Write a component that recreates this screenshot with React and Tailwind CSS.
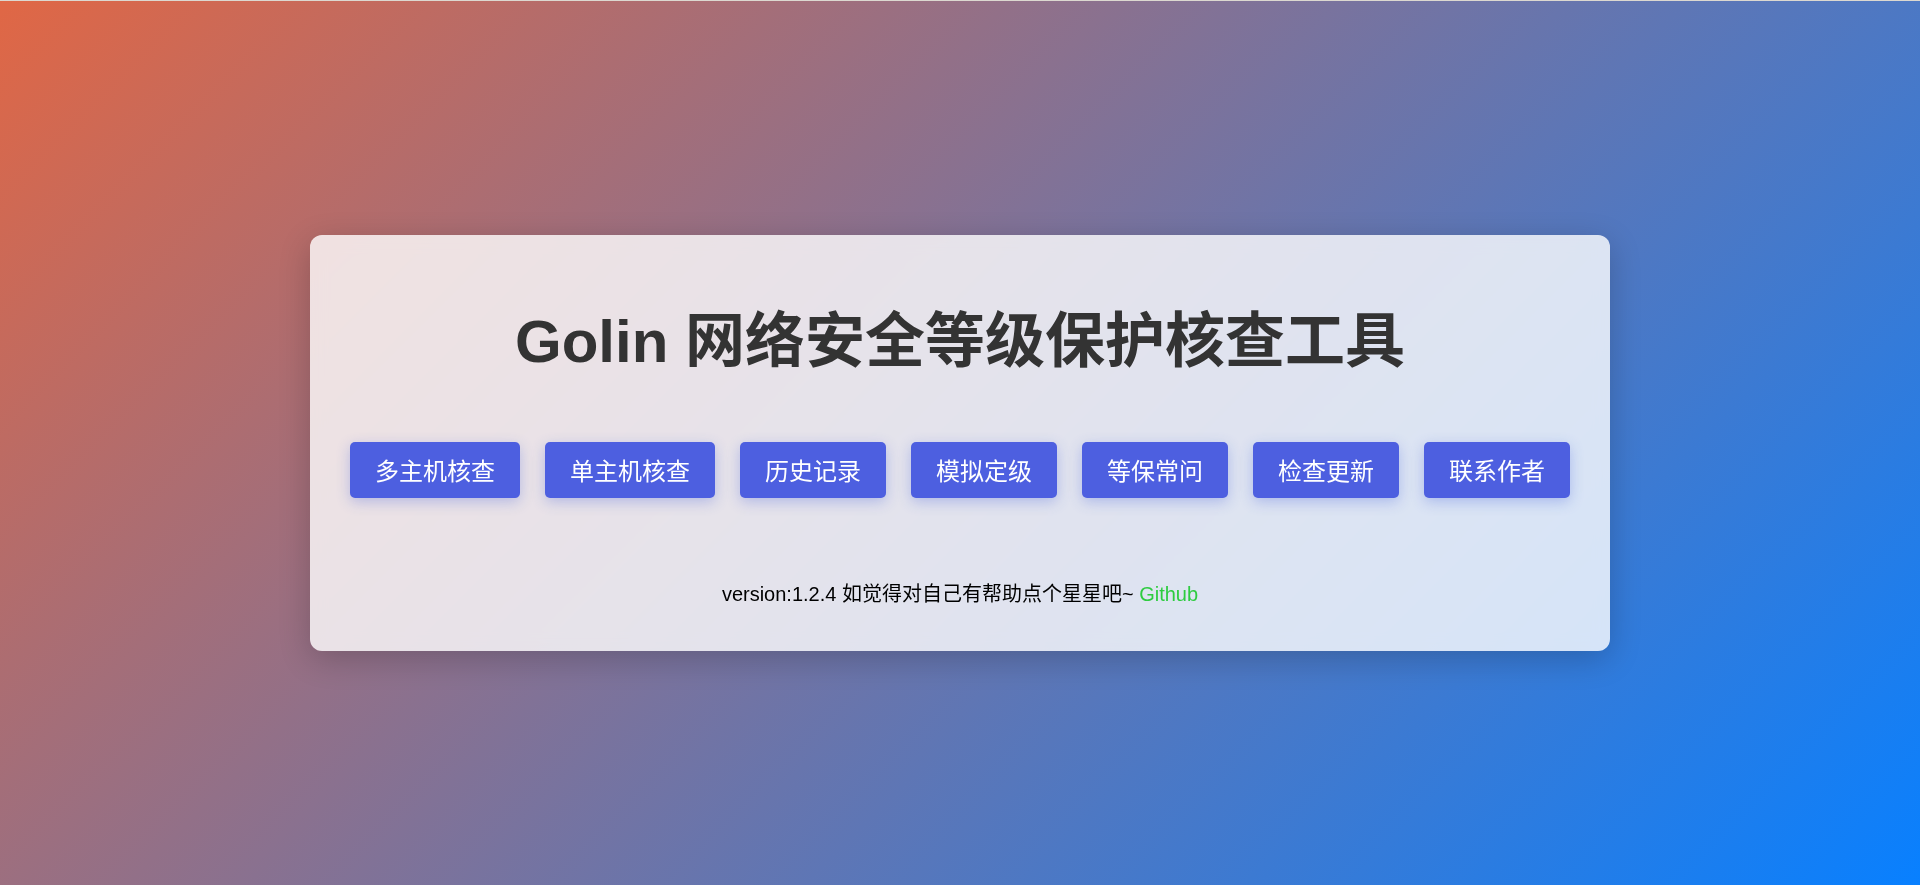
export default function App() {
  const buttons = ["多主机核查", "单主机核查", "历史记录", "模拟定级", "等保常问", "检查更新", "联系作者"];
  return (
    <div className="h-[885px] w-full border-t border-[#dcd8d0] bg-[linear-gradient(135deg,#e06745,#0880ff)] flex items-center justify-center font-['Liberation_Sans','Noto_Sans_CJK_SC',sans-serif]">
      <div className="w-[1300px] h-[416px] rounded-[12px] bg-white/80 backdrop-blur-sm shadow-[0_8px_32px_rgba(0,0,0,0.2)] flex flex-col items-center pt-[73px]">
        <h1 className="text-[60px] leading-[68px] font-bold text-[#333333] m-0">Golin 网络安全等级保护核查工具</h1>
        <div className="mt-[66px] flex gap-[25px]">
          {buttons.map((b) => (
            <button
              key={b}
              className="h-[56px] px-[25px] pt-[4px] rounded-[5px] bg-[#4d5fe0] text-white text-[24px] leading-[52px] shadow-[0_4px_14px_rgba(60,90,220,0.3)]"
            >
              {b}
            </button>
          ))}
        </div>
        <p className="mt-[82px] text-[20px] leading-[28px] text-black">
          version:1.2.4 如觉得对自己有帮助点个星星吧~ <a className="text-[#2ecc40]">Github</a>
        </p>
      </div>
    </div>
  );
}
